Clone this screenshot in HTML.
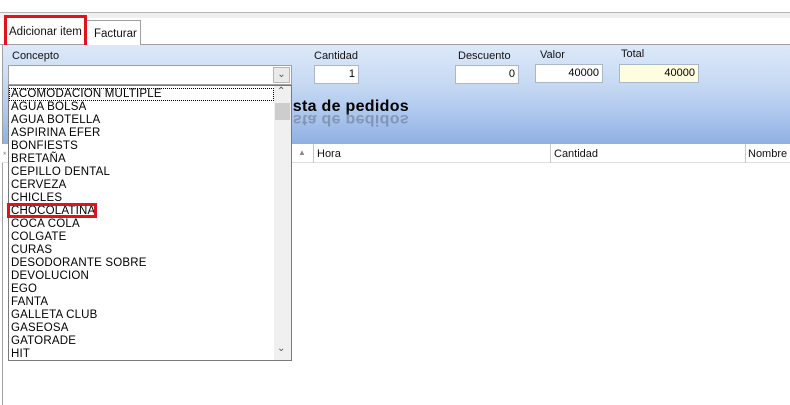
<!DOCTYPE html>
<html><head><meta charset="utf-8"><style>
*{margin:0;padding:0;box-sizing:border-box}
body{width:790px;height:405px;background:#fff;position:relative;overflow:hidden;font-family:"Liberation Sans",sans-serif;font-size:11px;color:#000}
.a{position:absolute}
.lbl{position:absolute;font-size:11px;color:#111}
.inp{position:absolute;height:19px;background:#fff;border:1px solid #a9b7c9;text-align:right;padding-right:3px;line-height:17px;font-size:11px}
.list{position:absolute;left:8px;top:85px;width:284px;height:276px;background:#fff;border:1px solid #7a7a7a;padding-top:2px}
.list div{height:13px;line-height:13px;font-size:11.5px;padding-left:2px;letter-spacing:0.2px;white-space:nowrap}
</style></head><body>
<div class="a" style="left:0;top:12px;width:790px;height:1px;background:#b5b5b5"></div>
<div class="a" style="left:0;top:13px;width:790px;height:5px;background:#f0f0f0"></div>
<div class="a" style="left:0;top:44px;width:790px;height:1px;background:#a0a0a0"></div>
<div class="a" style="left:86px;top:20px;width:55px;height:25px;border:1px solid #a0a0a0;border-bottom:none;background:#fff"></div>
<div class="lbl" style="left:94px;top:28px;font-size:11.5px">Facturar</div>
<div class="lbl" style="left:9px;top:26px;font-size:11.5px">Adicionar item</div>
<div class="a" style="left:4px;top:15px;width:83px;height:33px;border:3px solid #e0121b"></div>
<div class="a" style="left:2px;top:45px;width:788px;height:99px;background:linear-gradient(#dde9f9 0%,#c6d9f3 40%,#a8c3ec 75%,#8eb0e4 100%)"></div>
<div class="a" style="left:2px;top:45px;width:1px;height:360px;background:#a0a0a0"></div>
<div class="lbl" style="left:12px;top:50px">Concepto</div>
<div class="a" style="left:8px;top:65px;width:284px;height:20px;background:#fff;border:1px solid #a0a0a0"></div>
<div class="a" style="left:273px;top:67px;width:17px;height:16px;background:#eaeaea;border:1px solid #b5b5b5;font-size:10px;text-align:center;line-height:14px;color:#555">&#8964;</div>
<div class="lbl" style="left:314px;top:50px">Cantidad</div>
<div class="inp" style="left:314px;top:65px;width:45px">1</div>
<div class="lbl" style="left:458px;top:50px">Descuento</div>
<div class="inp" style="left:455px;top:65px;width:64px">0</div>
<div class="lbl" style="left:540px;top:49px">Valor</div>
<div class="inp" style="left:535px;top:64px;width:68px">40000</div>
<div class="lbl" style="left:621px;top:48px">Total</div>
<div class="inp" style="left:619px;top:64px;width:80px;background:#fffde0">40000</div>
<div class="a" style="left:288px;top:98px;font-size:16px;font-weight:bold;letter-spacing:0.3px">ista de pedidos</div>
<div class="a" style="left:288px;top:110px;font-size:16px;font-weight:bold;letter-spacing:0.3px;transform:scaleY(-1);opacity:0.35;color:#445">ista de pedidos</div>
<div class="a" style="left:2px;top:144px;width:788px;height:19px;background:#fff;border-bottom:1px solid #e0e0e0"></div>
<div class="a" style="left:298px;top:148px;font-size:8px;color:#888">&#9650;</div>
<div class="a" style="left:313px;top:144px;width:1px;height:19px;background:#c8c8c8"></div>
<div class="lbl" style="left:317px;top:148px">Hora</div>
<div class="a" style="left:550px;top:144px;width:1px;height:19px;background:#c8c8c8"></div>
<div class="lbl" style="left:554px;top:148px">Cantidad</div>
<div class="a" style="left:745px;top:144px;width:1px;height:19px;background:#c8c8c8"></div>
<div class="lbl" style="left:748px;top:148px">Nombre</div>
<div class="a" style="left:3px;top:150px;font-size:9px;color:#888">*</div>
<div class="list">
<div style="outline:1px dotted #000;outline-offset:-1px;width:265px">ACOMODACION MULTIPLE</div>
<div>AGUA BOLSA</div><div>AGUA BOTELLA</div><div>ASPIRINA EFER</div><div>BONFIESTS</div><div>BRETAÑA</div><div>CEPILLO DENTAL</div><div>CERVEZA</div><div>CHICLES</div><div>CHOCOLATINA</div><div>COCA COLA</div><div>COLGATE</div><div>CURAS</div><div>DESODORANTE SOBRE</div><div>DEVOLUCION</div><div>EGO</div><div>FANTA</div><div>GALLETA CLUB</div><div>GASEOSA</div><div>GATORADE</div><div>HIT</div>
</div>
<div class="a" style="left:274px;top:86px;width:17px;height:274px;background:#f0f0f0"></div>
<div class="a" style="left:275px;top:103px;width:15px;height:17px;background:#cdcdcd"></div>
<div class="a" style="left:277px;top:86px;font-size:10px;color:#555">&#8963;</div>
<div class="a" style="left:277px;top:343px;font-size:10px;color:#555">&#8964;</div>
<div class="a" style="left:7px;top:203px;width:90px;height:15px;border:3px solid #e0121b"></div>
</body></html>
